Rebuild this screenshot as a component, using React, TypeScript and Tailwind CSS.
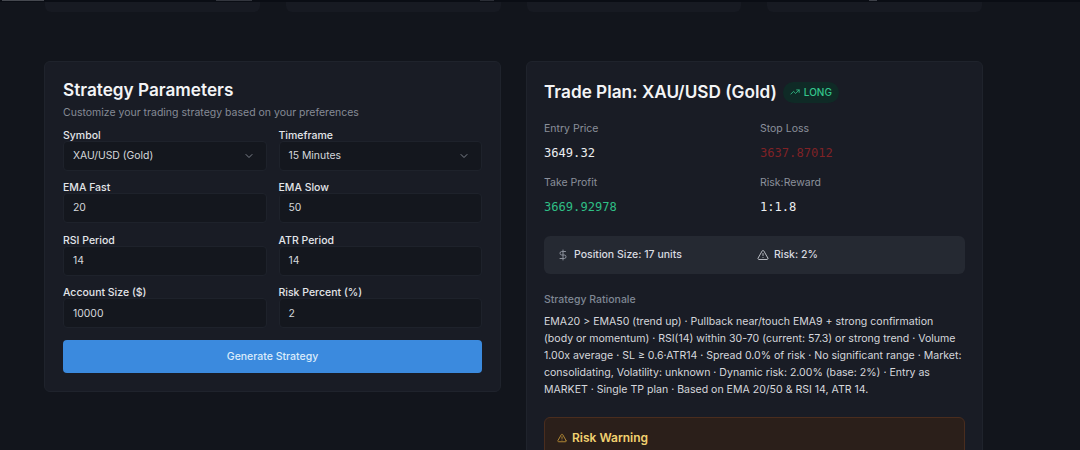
import { AlertTriangle, ChevronDown, DollarSign, TrendingUp } from 'lucide-react';

const fields = [
  [
    { label: 'Symbol', value: 'XAU/USD (Gold)', select: true },
    { label: 'Timeframe', value: '15 Minutes', select: true },
  ],
  [
    { label: 'EMA Fast', value: '20' },
    { label: 'EMA Slow', value: '50' },
  ],
  [
    { label: 'RSI Period', value: '14' },
    { label: 'ATR Period', value: '14' },
  ],
  [
    { label: 'Account Size ($)', value: '10000' },
    { label: 'Risk Percent (%)', value: '2' },
  ],
];

function Field({ label, value, select }: { label: string; value: string; select?: boolean }) {
  return (
    <div>
      <div className="text-[10.5px] leading-[11px] font-medium text-[#e3e5e9]">{label}</div>
      <div className="h-[30px] rounded-[4px] border border-[#1e222b] bg-[#14171e] pl-[9px] pr-[11px] flex items-center justify-between text-[10.4px] text-[#d5d7dc]">
        <span>{value}</span>
        {select && <ChevronDown className="w-3 h-3 text-[#7d828c]" />}
      </div>
    </div>
  );
}

function Stat({ label, value, color }: { label: string; value: string; color: string }) {
  return (
    <div className="h-[54px]">
      <div className="text-[10.5px] leading-[14px] text-[#8b909b]">{label}</div>
      <div className={`mt-[9px] text-[12.1px] leading-[16px] font-['DejaVu_Sans_Mono',monospace] ${color}`}>{value}</div>
    </div>
  );
}

export default function App() {
  return (
    <div className="h-[450px] w-[1080px] overflow-hidden bg-[#12151c] font-['Inter',sans-serif]">
      <div className="h-[2px] bg-[#0a0d14] flex items-start">
        <div className="ml-[2px] w-[42px] h-[1px] bg-[#45484f]" />
        <div className="ml-[172px] w-[36px] h-[1px] bg-[#33363e]" />
        <div className="ml-[228px] w-[14px] h-[1px] bg-[#2b2e36]" />
        <div className="ml-[375px] w-[8px] h-[1px] bg-[#3d4048]" />
      </div>
      <div className="grid grid-cols-4 gap-[26px] pl-[45px] pr-[98px]">
        <div className="h-[10px] rounded-b-[6px] bg-[#171a22]" />
        <div className="h-[10px] rounded-b-[6px] bg-[#171a22]" />
        <div className="h-[10px] rounded-b-[6px] bg-[#171a22]" />
        <div className="h-[10px] rounded-b-[6px] bg-[#171a22]" />
      </div>

      <div className="mt-[49px] pl-[44px] flex gap-[25px] items-start">
        <section className="w-[457px] h-[331px] rounded-[6px] border border-[#1f232c] bg-[#191c25] px-[18px] pt-[16px]">
          <h2 className="text-[17.2px] leading-[24px] font-semibold text-[#f3f4f6]">Strategy Parameters</h2>
          <p className="mt-[3px] text-[10.5px] leading-[15px] text-[#868b96]">Customize your trading strategy based on your preferences</p>
          <div className="mt-[9.5px] flex flex-col gap-[11.67px]">
            {fields.map((row) => (
              <div key={row[0].label} className="grid grid-cols-2 gap-[12px]">
                {row.map((f) => (
                  <Field key={f.label} {...f} />
                ))}
              </div>
            ))}
          </div>
          <button className="mt-[11.5px] w-full h-[33px] rounded-[4px] bg-[#3b8ade] text-[10.5px] font-medium text-[#dcecfb]">
            Generate Strategy
          </button>
        </section>

        <section className="w-[457px] h-[420px] rounded-[6px] border border-[#1f232c] bg-[#191c25] px-[17px] pt-[18px]">
          <div className="flex items-center gap-[6px]">
            <h2 className="text-[17.2px] leading-[24px] font-semibold text-[#f3f4f6]">Trade Plan: XAU/USD (Gold)</h2>
            <span className="h-[21px] px-[7px] rounded-full bg-[#0f2a26] flex items-center gap-[4px] text-[10px] font-medium text-[#34c58c]">
              <TrendingUp className="w-[10px] h-[10px]" />
              LONG
            </span>
          </div>
          <div className="mt-[18px] grid grid-cols-2 w-[432px]">
            <Stat label="Entry Price" value="3649.32" color="text-[#eceef1]" />
            <Stat label="Stop Loss" value="3637.87012" color="text-[#7f2226]" />
            <Stat label="Take Profit" value="3669.92978" color="text-[#2fbf85]" />
            <Stat label="Risk:Reward" value="1:1.8" color="text-[#eceef1]" />
          </div>
          <div className="mt-[6px] h-[38px] rounded-[6px] bg-[#252932] pl-[13px] grid grid-cols-[200px_1fr] items-center text-[10.5px] font-medium text-[#d9dbe0]">
            <div className="flex items-center gap-[5px]">
              <DollarSign className="w-[12px] h-[12px] text-[#8b909b]" />
              Position Size: 17 units
            </div>
            <div className="flex items-center gap-[5px]">
              <AlertTriangle className="w-[12px] h-[12px] text-[#b6b9c0]" />
              Risk: 2%
            </div>
          </div>
          <div className="mt-[19px] text-[10.5px] leading-[14px] font-medium text-[#7f8794]">Strategy Rationale</div>
          <p className="mt-[6px] text-[10.55px] leading-[17px] text-[#d5d7dc]">
            EMA20 &gt; EMA50 (trend up) · Pullback near/touch EMA9 + strong confirmation (body or momentum) · RSI(14) within 30-70 (current: 57.3) or strong trend · Volume 1.00x average · SL ≥ 0.6·ATR14 · Spread 0.0% of risk · No significant range · Market: consolidating, Volatility: unknown · Dynamic risk: 2.00% (base: 2%) · Entry as MARKET · Single TP plan · Based on EMA 20/50 &amp; RSI 14, ATR 14.
          </p>
          <div className="mt-[19px] h-[60px] rounded-[6px] border border-[#4a2d1e] bg-[#2b1f1a] pl-[12px] pt-[12px]">
            <div className="flex items-center gap-[5px] text-[12px] leading-[16px] font-semibold text-[#f1d170]">
              <AlertTriangle className="w-[10px] h-[10px] text-[#c99a3a]" />
              Risk Warning
            </div>
          </div>
        </section>
      </div>
    </div>
  );
}
